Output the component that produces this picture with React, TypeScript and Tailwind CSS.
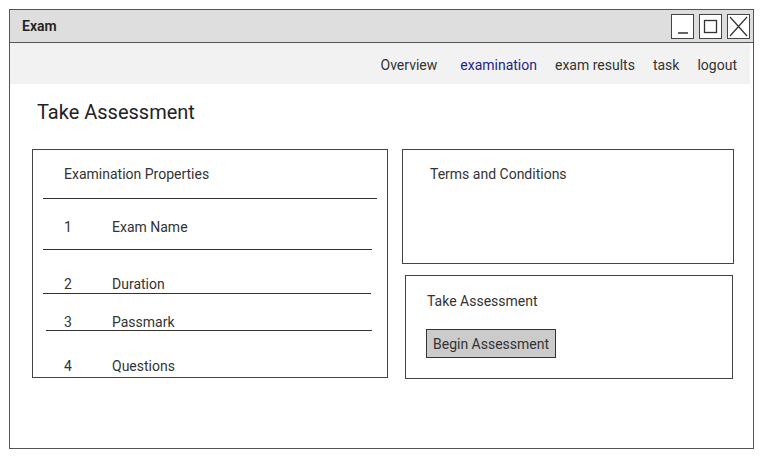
import React from "react";

const font = { fontFamily: "Roboto, 'Liberation Sans', sans-serif" };

function WinButton({ children }: { children: React.ReactNode }) {
  return (
    <div className="w-[23px] h-[25px] border border-[#444] bg-white flex items-center justify-center">
      {children}
    </div>
  );
}

const rows = [
  { n: "2", label: "Duration", h: "h-[43px] pt-[24px]" },
  { n: "3", label: "Passmark", h: "h-[36px] pt-[18px]" },
];

export default function App() {
  return (
    <div className="w-[770px] h-[460px] bg-white pt-[9px] pl-[9px] text-[#333]" style={font}>
      <div className="w-[745px] h-[440px] border border-[#555] flex flex-col">
        {/* title bar */}
        <div className="h-[33px] bg-[#dedede] border-b border-[#555] flex items-center justify-between pl-[12px] pr-[3px]">
          <span className="text-[14px] font-semibold text-[#222]">Exam</span>
          <div className="flex gap-[5px] pt-[1px]">
            <WinButton>
              <svg width="21" height="23" viewBox="0 0 21 23">
                <path d="M6 18h10" stroke="#333" strokeWidth="1.5" />
              </svg>
            </WinButton>
            <WinButton>
              <svg width="21" height="23" viewBox="0 0 21 23">
                <rect x="4.5" y="5.5" width="12" height="12" fill="none" stroke="#333" strokeWidth="1.3" />
              </svg>
            </WinButton>
            <WinButton>
              <svg width="21" height="23" viewBox="0 0 21 23">
                <path d="M2 2l17 19M19 2L2 21" stroke="#333" strokeWidth="1.2" />
              </svg>
            </WinButton>
          </div>
        </div>

        {/* nav */}
        <nav className="h-[41px] bg-[#f2f2f2] mr-[3px] flex items-center justify-end gap-[18px] pr-[13px] text-[14px] pt-[4px]">
          <a className="mr-[5px]">Overview</a>
          <a className="text-[#1f1f8f]">examination</a>
          <a>exam results</a>
          <a>task</a>
          <a>logout</a>
        </nav>

        <h1 className="text-[20px] leading-[24px] pl-[27px] pt-[16px] text-[#222]">Take Assessment</h1>

        <div className="flex pl-[22px] pt-[25px]">
          {/* left panel */}
          <section className="w-[356px] h-[229px] border border-[#444] text-[14px] leading-[20px]">
            <div className="h-[48px] pt-[14px] pl-[31px]">Examination Properties</div>
            <div className="mx-[10px] border-t border-[#333]" />
            <div className="h-[50px] pt-[18px] pl-[31px] flex">
              <span className="w-[48px]">1</span>
              <span>Exam Name</span>
            </div>
            <div className="ml-[10px] mr-[15px] border-t border-[#333]" />
            {rows.map((r) => (
              <React.Fragment key={r.n}>
                <div className={`${r.h} pl-[31px] flex`}>
                  <span className="w-[48px]">{r.n}</span>
                  <span>{r.label}</span>
                </div>
                <div className={r.n === "2" ? "ml-[10px] mr-[16px] border-t border-[#333]" : "ml-[13px] mr-[15px] border-t border-[#333]"} />
              </React.Fragment>
            ))}
            <div className="pt-[25px] pl-[31px] flex">
              <span className="w-[48px]">4</span>
              <span>Questions</span>
            </div>
          </section>

          {/* right column */}
          <div className="ml-[14px] flex flex-col gap-[11px]">
            <section className="w-[332px] h-[115px] border border-[#444] pt-[14px] pl-[27px] text-[14px] leading-[20px]">
              Terms and Conditions
            </section>
            <section className="ml-[3px] w-[328px] h-[104px] border border-[#444] pt-[15px] pl-[20px] text-[14px] leading-[20px]">
              <div className="pl-[1px]">Take Assessment</div>
              <button className="mt-[18px] w-[130px] h-[29px] bg-[#cbcbcb] border border-[#333] text-left pl-[6px] text-[14px] text-[#333]">
                Begin Assessment
              </button>
            </section>
          </div>
        </div>
      </div>
    </div>
  );
}
